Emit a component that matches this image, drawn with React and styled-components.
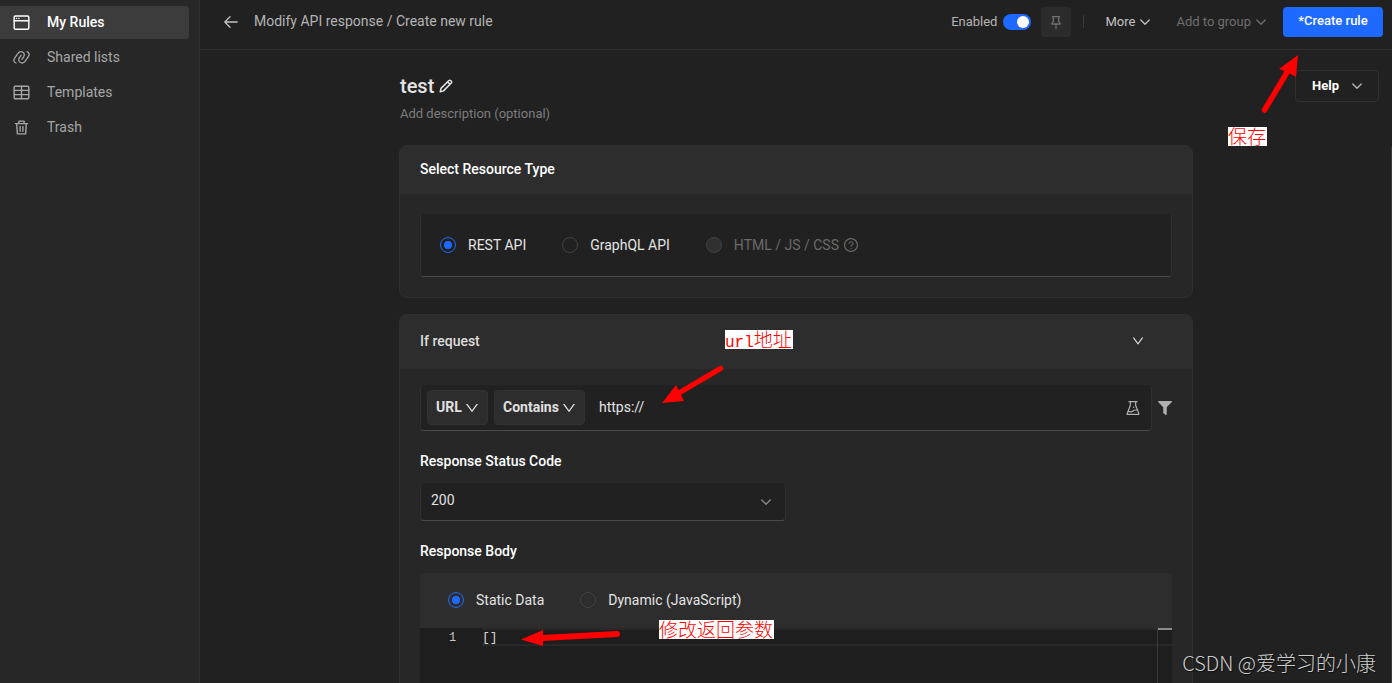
import React, { useState } from "react";
import styled, { createGlobalStyle, css } from "styled-components";
import {
  AiOutlineDown,
  AiOutlineExperiment,
  AiOutlineQuestionCircle,
} from "react-icons/ai";
import { RiPushpin2Line } from "react-icons/ri";
import { FaFilter } from "react-icons/fa";

const Global = createGlobalStyle`
  *, *::before, *::after { box-sizing: border-box; }
  body { margin: 0; background: #212121; }
  body, button, input, select {
    font-family: Roboto, "Liberation Sans", sans-serif;
    font-size: 14px;
    line-height: 20px;
  }
  button, input, select, textarea { margin: 0; }
  svg { display: block; flex: none; }
`;

const Shell = styled.div`
  position: relative;
  display: flex;
  height: 100vh;
  overflow: hidden;
  color: #e4e4e4;
`;

const Sidebar = styled.nav`
  flex: none;
  display: flex;
  flex-direction: column;
  gap: 2px;
  width: 200px;
  padding: 6px 10px 0 0;
  background: #272727;
  border-right: 1px solid #303030;
`;

const NavItem = styled.a`
  display: flex;
  align-items: center;
  gap: 17px;
  height: 33px;
  padding: 0 0 1px 13px;
  border-radius: 0 4px 4px 0;
  text-decoration: none;
  color: ${(p) => (p.$active ? "#ffffff" : "#a6a6a6")};
  background: ${(p) => (p.$active ? "#3c3c3c" : "transparent")};
  font-weight: ${(p) => (p.$active ? 500 : 400)};
`;

const Main = styled.main`
  flex: 1;
  min-width: 0;
  display: flex;
  flex-direction: column;
`;

const Header = styled.header`
  flex: none;
  display: flex;
  align-items: center;
  height: 50px;
  padding: 0 9px 6px 23px;
  border-bottom: 1px solid #303030;
  font-size: 13px;
`;

const Plain = styled.button`
  display: flex;
  align-items: center;
  gap: 5px;
  padding: 0;
  border: 0;
  background: none;
  font-size: 13px;
  color: ${(p) => (p.disabled ? "#6f6f6f" : "#c2c2c2")};
`;

const Crumb = styled.span`
  margin-left: 15px;
  padding-bottom: 2px;
  font-size: 14px;
  color: #b4b4b4;
`;

const Actions = styled.div`
  display: flex;
  align-items: center;
  margin-left: auto;
`;

const SwitchLabel = styled.label`
  display: flex;
  align-items: center;
  gap: 6px;
  color: #b4b4b4;
`;

const Switch = styled.input`
  appearance: none;
  width: 28px;
  height: 16px;
  padding: 2px;
  border-radius: 8px;
  background: #1e69ff;
  &::before {
    content: "";
    display: block;
    width: 12px;
    height: 12px;
    margin-left: 12px;
    border-radius: 50%;
    background: #fff;
  }
  &:not(:checked) { background: #555; }
  &:not(:checked)::before { margin-left: 0; }
`;

const PinButton = styled.button`
  display: grid;
  place-items: center;
  width: 30px;
  height: 30px;
  margin-left: 10px;
  padding: 0;
  border: 0;
  border-radius: 4px;
  background: #2c2c2c;
  color: #6e6e6e;
`;

const Divider = styled.span`
  width: 1px;
  height: 13px;
  margin: 0 21px 0 12px;
  background: #3a3a3a;
`;

const Primary = styled.button`
  width: 100px;
  height: 30px;
  margin-left: 17px;
  padding: 0 0 2px;
  border: 0;
  border-radius: 4px;
  background: #1e69ff;
  color: #fff;
  font-size: 13px;
  font-weight: 500;
`;

const Spacer = styled.span`
  width: 26px;
`;

const Scroll = styled.div`
  flex: 1;
  min-height: 0;
  overflow-y: auto;
  scrollbar-width: none;
  display: grid;
  grid-template-columns: 1fr minmax(0, 794px) 1fr;
  align-items: start;
  padding-top: 20px;
`;

const Column = styled.div`
  grid-column: 2;
`;

const HelpButton = styled.button`
  grid-column: 3;
  justify-self: end;
  display: flex;
  align-items: center;
  justify-content: space-between;
  width: 84px;
  height: 32px;
  margin-right: 13px;
  padding: 0 16px;
  border: 1px solid #303030;
  border-radius: 4px;
  background: #212121;
  color: #fff;
  font-size: 13px;
  font-weight: 700;
  & > svg { color: #b8b8b8; }
`;

const Title = styled.h1`
  display: flex;
  align-items: center;
  gap: 5px;
  margin: 0;
  padding: 4px 0 0 1px;
  font-size: 20px;
  line-height: 24px;
  font-weight: 500;
`;

const Description = styled.p`
  margin: 6px 0 21px;
  padding-left: 1px;
  font-size: 13px;
  color: #7d7d7d;
`;

const Card = styled.section`
  margin-bottom: 16px;
  border: 1px solid #303030;
  border-radius: 8px;
  background: #272727;
  overflow: hidden;
`;

const CardHead = styled.div`
  display: flex;
  align-items: center;
  justify-content: space-between;
  height: ${(p) => (p.$tall ? 54 : 48)}px;
  padding: 0 47px 2px 20px;
  background: #2d2d2d;
`;

const Heading = styled.h2`
  margin: 0;
  font-size: 14px;
  line-height: 20px;
  font-weight: 500;
  color: ${(p) => (p.$soft ? "#dcdcdc" : "#ffffff")};
`;

const CardBody = styled.div`
  padding: ${(p) => (p.$tight ? 16 : 20)}px 20px 20px;
`;

const sunken = css`
  background: #212121;
  border: 1px solid #303030;
  border-top-color: #222222;
  border-bottom-color: #4a4a4a;
  border-radius: 4px;
`;

const ResourceBox = styled.div`
  ${sunken}
  display: flex;
  align-items: center;
  gap: 36px;
  height: 63px;
  padding: 0 0 1px 19px;
`;

const Choice = styled.label`
  display: flex;
  align-items: center;
  gap: 12px;
  color: ${(p) => (p.$disabled ? "#6a6a6a" : "#e4e4e4")};
`;

const ChoiceText = styled.span`
  display: flex;
  align-items: center;
  gap: 4px;
`;

const Radio = styled.input`
  appearance: none;
  display: grid;
  place-items: center;
  width: 16px;
  height: 16px;
  border: 1px solid #424242;
  border-radius: 50%;
  &:checked { border-color: #1e69ff; }
  &:checked::before {
    content: "";
    width: 8px;
    height: 8px;
    border-radius: 50%;
    background: #1e69ff;
  }
  &:disabled { background: #303030; }
`;

const SourceRow = styled.div`
  display: flex;
  align-items: center;
  gap: 6px;
`;

const UrlBox = styled.div`
  ${sunken}
  flex: 1;
  display: flex;
  align-items: center;
  gap: 6px;
  height: 46px;
  padding: 0 9px 1px 6px;
`;

const SelectWrap = styled.span`
  display: grid;
  align-items: center;
  width: ${(p) => p.$width}px;
  color: ${(p) => (p.$muted ? "#8a8a8a" : "#e0e0e0")};
  & > * { grid-area: 1 / 1; }
  & > svg {
    justify-self: end;
    margin-right: ${(p) => (p.$muted ? 15 : 8)}px;
    pointer-events: none;
  }
`;

const ChipSelect = styled.select`
  appearance: none;
  width: 100%;
  height: 35px;
  padding: 0 8px 1px;
  border: 1px solid #323232;
  border-radius: 4px;
  background: #2d2d2d;
  color: #e0e0e0;
  font-weight: 700;
`;

const StatusSelect = styled.select`
  ${sunken}
  appearance: none;
  width: 100%;
  height: 38px;
  padding: 0 10px 4px;
  color: #e0e0e0;
`;

const UrlInput = styled.input`
  flex: 1;
  min-width: 0;
  padding: 0 8px 1px;
  border: 0;
  outline: 0;
  background: none;
  color: #e4e4e4;
`;

const IconButton = styled.button`
  padding: 0;
  border: 0;
  background: none;
  color: #b0b0b0;
`;

const FieldLabel = styled.label`
  display: block;
  margin: 20px 0 12px;
  font-weight: 500;
  color: #fff;
`;

const BodyModes = styled.div`
  display: flex;
  align-items: center;
  gap: 36px;
  height: 55px;
  padding: 0 0 1px 28px;
  border-radius: 4px 4px 0 0;
  background: #2d2d2d;
`;

const Editor = styled.div`
  display: flex;
  height: 300px;
  background: #1e1e1e;
  font-family: "Liberation Mono", monospace;
`;

const Gutter = styled.div`
  width: 62px;
  padding: 1px 0 0 29px;
  font-size: 12px;
  line-height: 18px;
  color: #c6c6c6;
`;

const Code = styled.textarea`
  flex: 1;
  padding: 1px 0 0;
  border: 0;
  outline: 0;
  resize: none;
  font-family: "Liberation Mono", monospace;
  font-size: 13px;
  line-height: 18px;
  color: #d4d4d4;
  background: linear-gradient(
    #282828 0 2px, #1e1e1e 2px 16px, #282828 16px 18px, #1e1e1e 18px
  );
`;

const Ruler = styled.div`
  width: 15px;
  border-left: 1px solid #3a3a3a;
  background: linear-gradient(
    #8c8c8c 0 2px, #1e1e1e 2px 16px, #282828 16px 18px, #1e1e1e 18px
  );
`;

const ScrollMark = styled.div`
  position: absolute;
  right: 0;
  top: 147px;
  bottom: 0;
  width: 1px;
  background: #3a3a3a;
`;

const Overlay = styled.svg`
  position: absolute;
  top: 0;
  left: 0;
  pointer-events: none;
`;

const Note = styled.span`
  position: absolute;
  left: ${(p) => p.$x}px;
  top: ${(p) => p.$y}px;
  height: 19px;
  padding-right: 1px;
  background: #fff;
  color: #ff0000;
  font-family: "Noto Sans CJK SC", sans-serif;
  font-weight: 300;
  font-size: 19px;
  line-height: 17px;
  white-space: nowrap;
`;

const Mono = styled.span`
  font-family: "Liberation Mono", monospace;
  font-size: 16px;
`;

const Watermark = styled.span`
  position: absolute;
  right: 16px;
  bottom: 6px;
  font-family: "Noto Sans CJK SC", sans-serif;
  font-size: 20px;
  line-height: 28px;
  font-weight: 300;
  color: #cccccc;
  text-shadow: 1px 1px 1px #111;
`;

const stroke = {
  fill: "none",
  stroke: "currentColor",
  strokeLinecap: "round",
  strokeLinejoin: "round",
};

const Chevron = ({ size = 10 }) => (
  <svg width={size} height={size} viewBox="0 0 10 10" {...stroke} strokeWidth="1.3">
    <path d="M0.8 3 5 7.2 9.2 3" />
  </svg>
);

const WindowIcon = () => (
  <svg width="17" height="17" viewBox="0 0 17 17" {...stroke} strokeWidth="1.4">
    <rect x="1.2" y="2" width="14.6" height="13.2" rx="1.2" />
    <path d="M1.2 6.7h14.6" />
    <path d="M3.6 4.4h.1M5.8 4.4h.1" />
  </svg>
);

const LinkIcon = () => (
  <svg width="17" height="17" viewBox="0 0 17 17" {...stroke} strokeWidth="1.3">
    <path d="M3 14C.9 13.300 .3 11.200 1.500 9.300L4.600 4.800C6 2.800 8.200 2.200 9.900 3.300 11.500 4.300 11.700 6.200 10.600 7.900L8.900 10.300" />
    <path d="M14 2.600C16.100 3.300 16.700 5.400 15.500 7.300L12.400 11.800C11 13.800 8.800 14.400 7.100 13.300 5.500 12.300 5.300 10.400 6.400 8.700L8.100 6.300" />
  </svg>
);

const TableIcon = () => (
  <svg width="17" height="17" viewBox="0 0 17 17" {...stroke} strokeWidth="1.4">
    <rect x="1.2" y="2.2" width="14.6" height="12.6" rx="1" />
    <path d="M1.2 6.4h14.6M1.2 10.6h14.6M8.5 2.2v12.6" />
  </svg>
);

const TrashIcon = () => (
  <svg width="17" height="17" viewBox="0 0 17 17" {...stroke} strokeWidth="1.4">
    <path d="M2.4 4.6h12.2M5.9 4.4V2.1h5.2v2.3M3.7 4.8l.7 10.1h8.2l.7-10.1M7.1 7.4v4.8M9.9 7.4v4.8" />
  </svg>
);

const BackIcon = () => (
  <svg width="16" height="16" viewBox="0 0 16 16" {...stroke} strokeWidth="1.3">
    <path d="M14.2 8H2M7 2.8 1.8 8 7 13.2" />
  </svg>
);

const PencilIcon = () => (
  <svg width="14" height="14" viewBox="0 0 14 14" {...stroke} strokeWidth="1.5">
    <path d="M1.2 12.8 2 9.4 9.9 1.5Q10.9.7 12 1.8T12.3 4L4.5 11.9ZM8.6 2.9 11 5.3" />
  </svg>
);

const NAV = [
  { label: "My Rules", icon: <WindowIcon />, active: true },
  { label: "Shared lists", icon: <LinkIcon /> },
  { label: "Templates", icon: <TableIcon /> },
  { label: "Trash", icon: <TrashIcon /> },
];

export default function App() {
  const [resource, setResource] = useState("rest");
  const [mode, setMode] = useState("static");
  const [url, setUrl] = useState("https://");
  const [body, setBody] = useState("[]");

  return (
    <Shell>
      <Global />
      <Sidebar>
        {NAV.map((n) => (
          <NavItem key={n.label} href="#" $active={n.active}>
            {n.icon}
            {n.label}
          </NavItem>
        ))}
      </Sidebar>

      <Main>
        <Header>
          <Plain aria-label="Back">
            <BackIcon />
          </Plain>
          <Crumb>Modify API response / Create new rule</Crumb>
          <Actions>
            <SwitchLabel>
              Enabled
              <Switch type="checkbox" role="switch" defaultChecked />
            </SwitchLabel>
            <PinButton aria-label="Pin rule">
              <RiPushpin2Line size={16} />
            </PinButton>
            <Divider />
            <Plain>
              More
              <Chevron />
            </Plain>
            <Spacer />
            <Plain disabled>
              Add to group
              <Chevron />
            </Plain>
            <Primary>*Create rule</Primary>
          </Actions>
        </Header>

        <Scroll>
          <Column>
            <Title>
              test
              <PencilIcon />
            </Title>
            <Description>Add description (optional)</Description>

            <Card>
              <CardHead>
                <Heading>Select Resource Type</Heading>
              </CardHead>
              <CardBody>
                <ResourceBox>
                  <Choice>
                    <Radio type="radio" name="resource" checked={resource === "rest"} onChange={() => setResource("rest")} />
                    REST API
                  </Choice>
                  <Choice>
                    <Radio type="radio" name="resource" checked={resource === "graphql"} onChange={() => setResource("graphql")} />
                    GraphQL API
                  </Choice>
                  <Choice $disabled>
                    <Radio type="radio" name="resource" disabled />
                    <ChoiceText>
                      HTML / JS / CSS
                      <AiOutlineQuestionCircle size={16} />
                    </ChoiceText>
                  </Choice>
                </ResourceBox>
              </CardBody>
            </Card>

            <Card>
              <CardHead $tall>
                <Heading $soft>If request</Heading>
                <AiOutlineDown size={14} />
              </CardHead>
              <CardBody $tight>
                <SourceRow>
                  <UrlBox>
                    <SelectWrap $width={61}>
                      <ChipSelect aria-label="Source key">
                        <option>URL</option>
                        <option>Host</option>
                        <option>Path</option>
                      </ChipSelect>
                      <AiOutlineDown size={16} />
                    </SelectWrap>
                    <SelectWrap $width={91}>
                      <ChipSelect aria-label="Operator" defaultValue="Contains">
                        <option>Equals</option>
                        <option>Contains</option>
                      </ChipSelect>
                      <AiOutlineDown size={16} />
                    </SelectWrap>
                    <UrlInput aria-label="URL value" value={url} onChange={(e) => setUrl(e.target.value)} />
                    <IconButton aria-label="Test URL condition">
                      <AiOutlineExperiment size={18} />
                    </IconButton>
                  </UrlBox>
                  <IconButton aria-label="Source filters">
                    <FaFilter size={14} />
                  </IconButton>
                </SourceRow>

                <FieldLabel htmlFor="status">Response Status Code</FieldLabel>
                <SelectWrap $width={366} $muted>
                  <StatusSelect id="status" defaultValue="200">
                    <option>200</option>
                    <option>404</option>
                    <option>500</option>
                  </StatusSelect>
                  <Chevron />
                </SelectWrap>

                <FieldLabel htmlFor="body">Response Body</FieldLabel>
                <BodyModes>
                  <Choice>
                    <Radio type="radio" name="mode" checked={mode === "static"} onChange={() => setMode("static")} />
                    Static Data
                  </Choice>
                  <Choice>
                    <Radio type="radio" name="mode" checked={mode === "dynamic"} onChange={() => setMode("dynamic")} />
                    Dynamic (JavaScript)
                  </Choice>
                </BodyModes>
                <Editor>
                  <Gutter>1</Gutter>
                  <Code id="body" spellCheck={false} value={body} onChange={(e) => setBody(e.target.value)} />
                  <Ruler />
                </Editor>
              </CardBody>
            </Card>
          </Column>
          <HelpButton>
            Help
            <Chevron />
          </HelpButton>
        </Scroll>
      </Main>

      <ScrollMark />
      <Overlay width="1392" height="683" viewBox="0 0 1392 683" fill="#ff0000" stroke="#ff0000" strokeLinecap="round" aria-hidden="true">
        <path d="M1264.5 110 1289 69" strokeWidth="5.5" />
        <path d="M1298 55 1279 69 1287 72 1296 77Z" stroke="none" />
        <path d="M720.500 368.500 678 393.500" strokeWidth="5.5" />
        <path d="M662 403 676 385 679 391 684 401Z" stroke="none" />
        <path d="M617 634 542 638" strokeWidth="6" />
        <path d="M521 639.500 543 630V646Z" stroke="none" />
      </Overlay>
      <Note $x={1228} $y={127}>保存</Note>
      <Note $x={725} $y={330}><Mono>url</Mono>地址</Note>
      <Note $x={659} $y={620}>修改返回参数</Note>
      <Watermark>CSDN @爱学习的小康</Watermark>
    </Shell>
  );
}
